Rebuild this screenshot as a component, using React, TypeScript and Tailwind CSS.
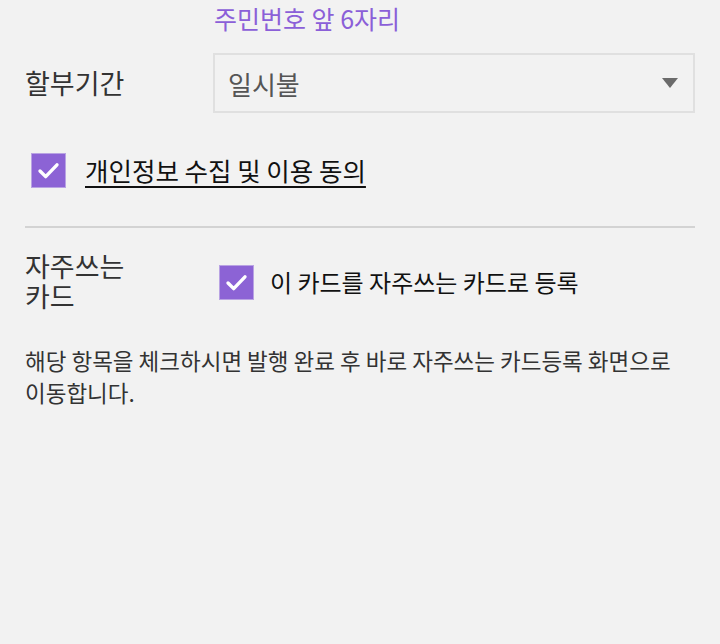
import { useState } from "react";

function CheckBox({ checked, onToggle }: { checked: boolean; onToggle: () => void }) {
  return (
    <button
      type="button"
      onClick={onToggle}
      className={`size-[35px] shrink-0 flex items-center justify-center border border-[#b9a3e3] ${
        checked ? "bg-[#8c63d5]" : "bg-white"
      }`}
    >
      {checked && (
        <svg viewBox="0 0 35 35" className="size-[35px]">
          <polyline
            points="8.5,18 14.5,24 26.5,11.5"
            fill="none"
            stroke="white"
            strokeWidth="3.6"
            strokeLinecap="round"
            strokeLinejoin="round"
          />
        </svg>
      )}
    </button>
  );
}

export default function App() {
  const [agree, setAgree] = useState(true);
  const [favorite, setFavorite] = useState(true);

  return (
    <div
      className="min-h-screen bg-[#f2f2f2] px-[25px] text-[#333]"
      style={{ fontFamily: '"Noto Sans CJK KR", "Noto Sans", sans-serif' }}
    >
      <p className="pl-[189px] text-[25px] leading-[36px] text-[#8b5fd8]">
        주민번호 앞 6자리
      </p>

      <div className="mt-[17px] flex items-center">
        <span className="w-[188px] text-[27px] text-[#333]">할부기간</span>
        <div className="flex h-[60px] flex-1 items-center justify-between border-2 border-[#e0e0e0] pl-[13px] pr-[15px]">
          <span className="text-[26px] text-[#555]">일시불</span>
          <svg viewBox="0 0 16 10" className="h-[10px] w-[16px]">
            <polygon points="0,0 16,0 8,10" fill="#6b6b6b" />
          </svg>
        </div>
      </div>

      <div className="mt-[38px] flex items-center gap-[19px] pl-[6px]">
        <CheckBox checked={agree} onToggle={() => setAgree(!agree)} />
        <span className="text-[25.5px] text-[#111] underline underline-offset-[5px] decoration-[1.5px]">
          개인정보 수집 및 이용 동의
        </span>
      </div>

      <div className="mt-[37px] h-[2px] bg-[#d3d3d3]" />

      <div className="mt-[23px] flex items-start">
        <div className="w-[194px] text-[27px] leading-[30px] text-[#333]">
          <div>자주쓰는</div>
          <div>카드</div>
        </div>
        <div className="mt-[13px] flex items-center gap-[16px]">
          <CheckBox checked={favorite} onToggle={() => setFavorite(!favorite)} />
          <span className="text-[24px] text-[#111]">이 카드를 자주쓰는 카드로 등록</span>
        </div>
      </div>

      <p className="mt-[33px] text-[22.5px] leading-[32px] text-[#333]">
        해당 항목을 체크하시면 발행 완료 후 바로 자주쓰는 카드등록 화면으로
        <br />
        이동합니다.
      </p>
    </div>
  );
}
